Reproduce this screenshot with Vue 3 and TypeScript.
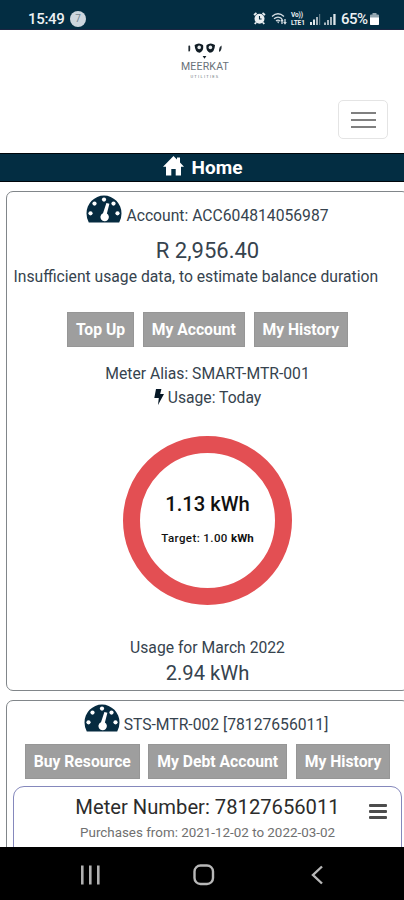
<script setup lang="ts">
interface Action {
  label: string
  width: number
}

const accountActions: Action[] = [
  { label: 'Top Up', width: 67 },
  { label: 'My Account', width: 102.5 },
  { label: 'My History', width: 94.5 },
]

const meterActions: Action[] = [
  { label: 'Buy Resource', width: 115 },
  { label: 'My Debt Account', width: 139 },
  { label: 'My History', width: 94.5 },
]
</script>

<template>
  <div class="phone">
    <header class="status">
      <span class="time">15:49</span>
      <span class="notice">7</span>
      <span class="spacer"></span>
      <svg class="alarm" width="13" height="13" viewBox="0 0 13 13">
        <path d="M1 3 L3.5 1 M12 3 L9.5 1 M3 10.5 L1.8 12 M10 10.5 L11.2 12" stroke="#e9eef1" stroke-width="1.8" />
        <circle cx="6.5" cy="6.7" r="5" fill="#e9eef1" />
        <path d="M6.5 4 V7 H8.6" fill="none" stroke="#032d42" stroke-width="1.1" />
      </svg>
      <svg class="wifi" width="16" height="13" viewBox="0 0 16 13">
        <g fill="none" stroke="#d5dee3" stroke-width="1.3">
          <path d="M1 4.4 Q7 -0.8 13 4.4" />
          <path d="M3 6.8 Q7 3.4 11 6.8" />
          <path d="M5 9 Q7 7.4 9 9" />
          <path d="M11 12 V7.5 M14 7 V11.5" />
        </g>
        <path d="M6 9.5 L8.4 9.5 L7.2 11.5Z M9.2 9.2 L11 6.5 L12.7 9.2Z M12.2 10 L14 12.8 L15.8 10Z" fill="#d5dee3" />
      </svg>
      <span class="volte"><span>Vo))</span><span>LTE1</span></span>
      <svg class="signal" width="12" height="12" viewBox="0 0 12 12">
        <path d="M1 9 H3 V12 H1Z M4 6.5 H6 V12 H4Z" fill="#dfe6ea" />
        <path d="M7 4 H9 V12 H7Z" fill="#a6b5bd" />
        <path d="M10 1 H11.2 V12 H10Z" fill="#597684" />
      </svg>
      <svg class="signal" width="12" height="12" viewBox="0 0 12 12">
        <path d="M0 9.5 H2 V12 H0Z M3 7 H5 V12 H3Z M6 4 H8 V12 H6Z" fill="#a6b5bd" />
        <path d="M9.3 1 H11.6 V12 H9.3Z" fill="#dfe6ea" />
      </svg>
      <span class="percent">65%</span>
      <svg class="battery" width="9" height="12" viewBox="0 0 9 12">
        <path d="M2.5 0 H6.5 V1.5 H8 Q9 1.5 9 2.5 V11 Q9 12 8 12 H1 Q0 12 0 11 V2.5 Q0 1.5 1 1.5 H2.5Z" fill="#94a7b1" />
        <path d="M0 4.5 H9 V11 Q9 12 8 12 H1 Q0 12 0 11Z" fill="#fff" />
      </svg>
    </header>

    <section class="top">
      <div class="brand">
        <svg width="36" height="17" viewBox="0 0 36 17">
          <path d="M1.4 2.8 Q3.2 1.6 3.2 3.8 V6.4 Q3.2 9.4 1.4 8.2Z M34.6 2.6 L32.8 4 Q31 9.4 33 8.6 Q34.8 7 34.6 2.6Z" fill="#222c33" />
          <path d="M7.6 2 Q12 -1.2 16 2 Q17.2 7.4 12.8 9.8 Q8 9.6 7.6 2Z M19.6 2 Q23.6 -1.2 28 2 Q27.6 9.6 22.8 9.8 Q18.4 7.4 19.6 2Z" fill="#111d25" />
          <circle cx="12.2" cy="4.4" r="1.8" fill="#e6eaec" />
          <circle cx="23.4" cy="4.4" r="1.8" fill="#e6eaec" />
          <path d="M15.6 13 H19.4 L17.5 15.8Z" fill="#111d25" />
        </svg>
        <span class="brand-name">MEERKAT</span>
        <span class="brand-sub">UTILITIES</span>
      </div>
      <button class="toggler" aria-label="Menu"><i></i><i></i><i></i></button>
    </section>

    <div class="home">
      <svg width="21" height="20" viewBox="0 0 21 20">
        <path d="M10.5 0 L14 3.5 V1.5 H17 V6.5 L21 10.8 H18 V19.5 H12.7 V13 H8.3 V19.5 H3 V10.8 H0Z" fill="#fff" />
      </svg>
      <span>Home</span>
    </div>

    <main class="content">
      <section class="card account">
        <div class="line title">
          <svg class="gauge" width="36" height="28" viewBox="0 0 36 28">
            <path d="M2.8 27.5 Q0.5 23.5 0.5 18.5 A17.5 18 0 0 1 35.5 18.5 Q35.5 23.5 33.2 27.5Z" fill="#062b40" />
            <g fill="#fff">
              <circle cx="4.5" cy="18.3" r="2.1" /><circle cx="8.5" cy="8.6" r="2.1" />
              <circle cx="18" cy="4.6" r="2.1" /><circle cx="27.5" cy="8.6" r="2.1" />
              <circle cx="31.5" cy="18.3" r="2.1" />
              <path d="M20.4 8 L23.4 8.8 L20.9 18.5 A4.2 4.2 0 1 1 17 18.2Z" />
            </g>
          </svg>
          <span>Account: ACC604814056987</span>
        </div>
        <div class="line balance"><span>R 2,956.40</span></div>
        <div class="line estimate"><span>Insufficient usage data, to estimate balance duration</span></div>
        <div class="actions">
          <button v-for="a in accountActions" :key="a.label" :style="{ width: a.width + 'px' }">{{ a.label }}</button>
        </div>
        <div class="line alias"><span>Meter Alias: SMART-MTR-001</span></div>
        <div class="line today">
          <svg width="10" height="16" viewBox="0 0 10 16">
            <path d="M2 0 H7.4 L6.2 5 H10 L4 16 L4.8 9 H0.3Z" fill="#061826" />
          </svg>
          <span>Usage: Today</span>
        </div>
        <div class="donut">
          <strong>1.13 kWh</strong>
          <span>Target: 1.00 <b>kWh</b></span>
        </div>
        <div class="line month"><span>Usage for March 2022</span></div>
        <div class="line total"><span>2.94 kWh</span></div>
      </section>

      <section class="card meter">
        <div class="line title">
          <svg class="gauge" width="36" height="28" viewBox="0 0 36 28">
            <path d="M2.8 27.5 Q0.5 23.5 0.5 18.5 A17.5 18 0 0 1 35.5 18.5 Q35.5 23.5 33.2 27.5Z" fill="#062b40" />
            <g fill="#fff">
              <circle cx="4.5" cy="18.3" r="2.1" /><circle cx="8.5" cy="8.6" r="2.1" />
              <circle cx="18" cy="4.6" r="2.1" /><circle cx="27.5" cy="8.6" r="2.1" />
              <circle cx="31.5" cy="18.3" r="2.1" />
              <path d="M20.4 8 L23.4 8.8 L20.9 18.5 A4.2 4.2 0 1 1 17 18.2Z" />
            </g>
          </svg>
          <span>STS-MTR-002 [78127656011]</span>
        </div>
        <div class="actions">
          <button v-for="a in meterActions" :key="a.label" :style="{ width: a.width + 'px' }">{{ a.label }}</button>
        </div>
        <div class="chart">
          <div class="chart-text">
            <span class="chart-title">Meter Number: 78127656011</span>
            <span class="chart-sub">Purchases from: 2021-12-02 to 2022-03-02</span>
          </div>
          <div class="burger"><i></i><i></i><i></i></div>
        </div>
      </section>
    </main>

    <nav class="nav">
      <svg width="20" height="20" viewBox="0 0 20 20">
        <path d="M2.3 0.5 V19.5 M10.3 0.5 V19.5 M18.3 0.5 V19.5" stroke="#b0b0b0" stroke-width="2.6" />
      </svg>
      <svg width="22" height="22" viewBox="0 0 22 22">
        <rect x="1.5" y="1.5" width="18.5" height="18.5" rx="6" fill="none" stroke="#b8b8b8" stroke-width="2.4" />
      </svg>
      <svg width="13" height="20" viewBox="0 0 13 20">
        <path d="M11 1.5 L2 10 L11 18.5" fill="none" stroke="#b8b8b8" stroke-width="2.4" />
      </svg>
    </nav>
  </div>
</template>

<style>
body {
  margin: 0;
  overflow: hidden;
}
</style>

<style scoped>
* {
  box-sizing: border-box;
}
.phone {
  width: 404px;
  height: 900px;
  display: flex;
  flex-direction: column;
  overflow: hidden;
  background: #fff;
  color: #36434e;
  font-family: Roboto, "Liberation Sans", sans-serif;
  white-space: nowrap;
}
button {
  font-family: inherit;
  padding: 0;
}
.status {
  flex: none;
  height: 30px;
  display: flex;
  align-items: center;
  padding: 8px 25px 0 28px;
  background: #032d42;
  border-bottom: 1px solid #1c2642;
  color: #edf1f3;
}
.time {
  width: 36px;
  font-size: 15px;
  font-weight: 500;
  letter-spacing: -0.3px;
}
.notice {
  width: 16px;
  height: 16px;
  margin-left: 6px;
  border-radius: 50%;
  background: #cdd6de;
  color: #73848f;
  font-size: 10px;
  line-height: 16px;
  text-align: center;
}
.spacer {
  flex: 1;
}
.wifi {
  margin-left: 5px;
}
.volte {
  width: 15px;
  margin-left: 4px;
  display: flex;
  flex-direction: column;
  font-size: 6.5px;
  font-weight: 700;
  line-height: 8px;
  letter-spacing: -0.1px;
}
.signal {
  margin-left: 3px;
}
.percent {
  width: 28px;
  margin-left: 5px;
  font-size: 15px;
  font-weight: 500;
  letter-spacing: -0.5px;
}
.battery {
  margin-left: 1px;
}
.top {
  flex: none;
  height: 123px;
  display: flex;
  flex-direction: column;
}
.brand {
  height: 70px;
  padding: 13px 0 0 6px;
  display: flex;
  flex-direction: column;
  align-items: center;
  color: #687178;
}
.brand svg {
  flex: none;
}
.brand-name {
  margin-top: 1px;
  font-size: 10.5px;
  line-height: 12px;
  letter-spacing: 0.2px;
}
.brand-sub {
  margin-top: 1px;
  font-size: 4px;
  line-height: 5px;
  letter-spacing: 1.3px;
}
.toggler {
  width: 50px;
  height: 39px;
  margin-left: auto;
  margin-right: 16px;
  display: flex;
  flex-direction: column;
  align-items: center;
  justify-content: center;
  gap: 5px;
  background: #fff;
  border: 1px solid #e4e4e4;
  border-radius: 5px;
}
.toggler i {
  width: 25px;
  height: 2px;
  background: #808080;
}
.home {
  flex: none;
  height: 29px;
  display: flex;
  align-items: center;
  justify-content: center;
  gap: 8px;
  padding-left: 1px;
  background: #032d42;
  border-top: 1px solid #00060b;
  border-bottom: 1px solid #00060b;
  color: #fff;
  font-size: 19px;
  font-weight: 700;
}
.home svg {
  margin-top: -4px;
}
.content {
  flex: 1;
  min-height: 0;
  overflow: hidden;
  padding: 9px 0 0 6px;
  display: flex;
  flex-direction: column;
  gap: 9px;
}
.card {
  flex: none;
  width: 403px;
  border: 1px solid #81868a;
  border-radius: 7px;
}
.account {
  height: 500px;
}
.meter {
  height: 170px;
}
.line {
  display: flex;
  align-items: center;
  justify-content: center;
}
.title {
  gap: 4px;
  align-items: flex-start;
  font-size: 15.7px;
  height: 45px;
  padding-top: 3px;
}
.title span {
  line-height: 19px;
  padding-top: 11px;
}
.balance {
  height: 26px;
  font-size: 22px;
}
.estimate {
  height: 27px;
  justify-content: flex-start;
  padding-left: 6.5px;
  font-size: 15.7px;
}
.actions {
  display: flex;
  justify-content: center;
  gap: 8.5px;
}
.account .actions {
  margin-top: 22px;
}
.actions button {
  height: 35px;
  border: 1px solid #969696;
  background: #9e9e9e;
  color: #fff;
  font-size: 15.7px;
  font-weight: 700;
}
.alias {
  margin-top: 15px;
  height: 23px;
  font-size: 15.7px;
}
.today {
  height: 25px;
  gap: 4px;
  font-size: 15.7px;
}
.today svg {
  margin-top: -2px;
}
.donut {
  width: 169px;
  height: 169px;
  margin: 26px auto 0;
  border: 17px solid #e34f53;
  border-radius: 50%;
  display: flex;
  flex-direction: column;
  align-items: center;
  color: #111;
}
.donut strong {
  margin-top: 39px;
  font-size: 20.2px;
  line-height: 24px;
  font-weight: 500;
}
.donut span {
  margin-top: 14px;
  font-size: 11.5px;
  line-height: 16px;
  font-weight: 500;
  letter-spacing: 0.4px;
}
.donut b {
  letter-spacing: 0;
}
.month {
  margin-top: 31px;
  height: 23px;
  font-size: 15.7px;
}
.total {
  height: 28px;
  font-size: 20.2px;
}
.meter .title {
  height: 43px;
  padding-right: 3px;
}
.chart {
  width: 389px;
  height: 100px;
  margin: 7px 0 0 6px;
  border: 1px solid #8588bc;
  border-radius: 11px;
  display: flex;
}
.chart-text {
  flex: 1;
  display: flex;
  flex-direction: column;
  align-items: center;
  padding-left: 34px;
}
.chart-title {
  margin-top: 8px;
  font-size: 20.2px;
  line-height: 24px;
  color: #2c2c2c;
}
.chart-sub {
  margin-top: 5px;
  font-size: 13.4px;
  line-height: 18px;
  color: #707070;
}
.burger {
  width: 18px;
  margin: 17px 14px 0 2px;
  display: flex;
  flex-direction: column;
  gap: 3px;
}
.burger i {
  height: 3px;
  border-radius: 1px;
  background: #4c4c4c;
}
.nav {
  flex: none;
  height: 53px;
  display: flex;
  align-items: center;
  background: #000;
  padding: 2px 0 0 80px;
}
.nav svg:nth-child(2) {
  margin-left: 93px;
}
.nav svg:nth-child(3) {
  margin-left: 96px;
}
</style>
